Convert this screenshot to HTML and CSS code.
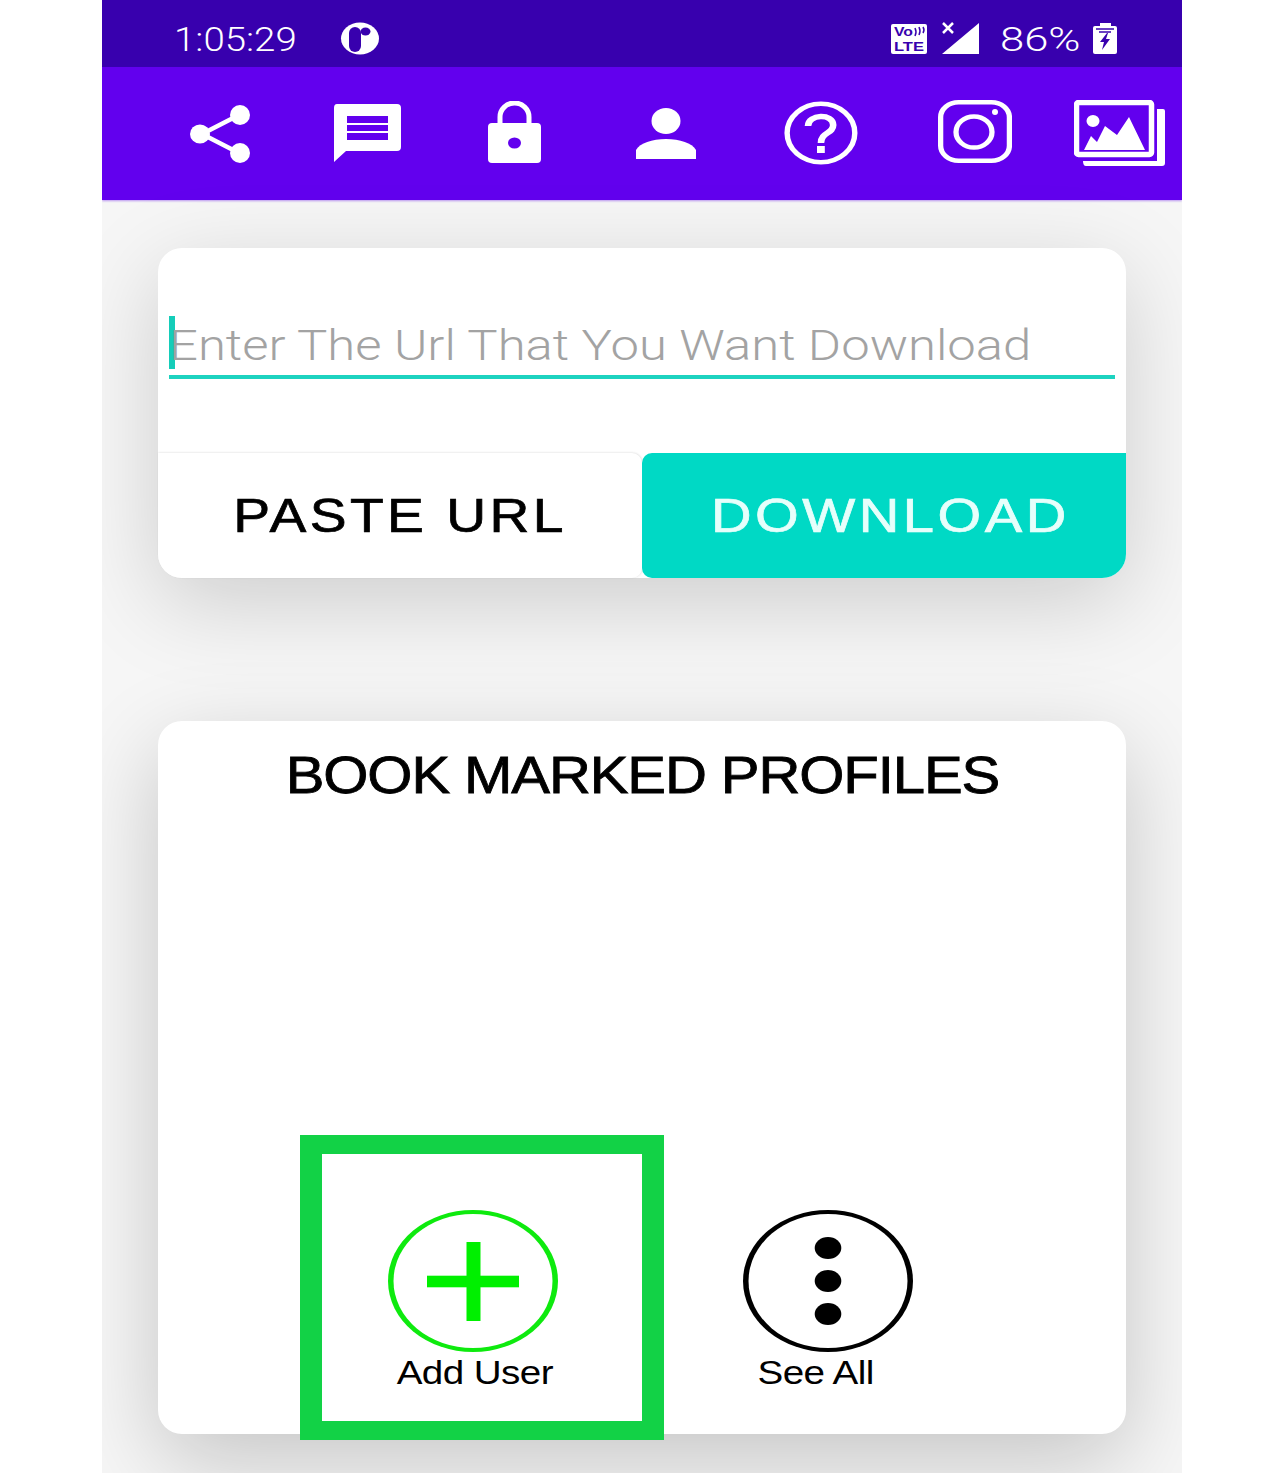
FILE: index.html
```html
<!DOCTYPE html>
<html lang="en">
<head>
    <meta charset="UTF-8">
    <meta name="viewport" content="width=device-width, initial-scale=1.0">
    <title>Bookmarked profiles</title>
    <link rel="stylesheet" href="styles.css">
</head>
<body>
    <div class="phone">
        <!-- status bar -->
        <div class="statusBar">
            <span class="clock">1:05:29</span>
            <svg class="appDot" width="40" height="33" viewBox="0 0 40 33">
                <ellipse cx="20" cy="16.500" rx="19" ry="16" fill="#fff"/>
                <rect x="9" y="5" width="12" height="25" rx="6" fill="#3800ae"/>
                <ellipse cx="25.500" cy="9.500" rx="5" ry="4" fill="#3800ae"/>
            </svg>
            <div class="statusRight">
                <svg class="volte" width="36" height="30" viewBox="0 0 36 30">
                    <rect width="36" height="30" rx="2" fill="#fff"/>
                    <text x="3" y="12" class="volteText" textLength="19" lengthAdjust="spacingAndGlyphs">Vo</text>
                    <text x="3" y="27" class="volteText" textLength="30" lengthAdjust="spacingAndGlyphs">LTE</text>
                    <path d="M24 4 q2 4 0 8 M28 3 q2 4 0 8 M32 3 q2 3 0 6" stroke="#3800ae" stroke-width="1.500" fill="none"/>
                </svg>
                <svg class="signal" width="38" height="33" viewBox="0 0 38 33">
                    <path d="M0 32 L37 1 V32 Z" fill="#fff"/>
                    <path d="M1 1 L11 11 M11 1 L1 11" stroke="#fff" stroke-width="2.500"/>
                </svg>
                <span class="percent">86%</span>
                <svg class="battery" width="24" height="31" viewBox="0 0 24 31">
                    <rect x="7" y="0" width="11" height="3" fill="#fff"/>
                    <rect x="0" y="3" width="24" height="28" rx="2" fill="#fff"/>
                    <path d="M3 6 H21 M6 9 H18" stroke="#3800ae" stroke-width="1.500"/>
                    <path d="M14 10 L7 19 H11 L9 27 L17 16 H13 L15 10 Z" fill="#3800ae"/>
                </svg>
            </div>
        </div>

        <!-- toolbar icons -->
        <div class="toolbar">
            <svg class="icon iconShare" width="62" height="60" viewBox="0 0 62 60">
                <path d="M49 11 L12 30 L49 49" stroke="#fff" stroke-width="4.500" fill="none"/>
                <ellipse cx="50" cy="11" rx="10" ry="10" fill="#fff"/>
                <ellipse cx="10" cy="30" rx="10" ry="9.500" fill="#fff"/>
                <ellipse cx="50" cy="49" rx="10" ry="10" fill="#fff"/>
            </svg>
            <svg class="icon iconMessage" width="68" height="59" viewBox="0 0 68 59">
                <path d="M4 0 H64 Q68 0 68 4 V43 Q68 47 64 47 H13 L1 58 V4 Q1 0 4 0 Z" fill="#fff"/>
                <path d="M14 12 H55 V19 H14 Z M14 21 H55 V27 H14 Z M14 29 H55 V36 H14 Z" fill="#6200ee"/>
            </svg>
            <svg class="icon iconLock" width="55" height="62" viewBox="0 0 55 62">
                <path d="M13 24 V16 A14.500 14 0 0 1 42 16 V24" stroke="#fff" stroke-width="5" fill="none"/>
                <rect x="1" y="22" width="53" height="40" rx="4" fill="#fff"/>
                <ellipse cx="27.500" cy="42" rx="6.500" ry="5.500" fill="#6200ee"/>
            </svg>
            <svg class="icon iconPerson" width="60" height="52" viewBox="0 0 60 52">
                <ellipse cx="30" cy="13" rx="14.500" ry="13" fill="#fff"/>
                <path d="M0 51 V42 C4 35 16 31 30 31 C44 31 56 35 60 42 V51 Z" fill="#fff"/>
            </svg>
            <svg class="icon iconHelp" width="74" height="64" viewBox="0 0 74 64">
                <g transform="scale(1.2 1)">
                    <ellipse cx="30.800" cy="32" rx="28.200" ry="29.200" fill="none" stroke="#fff" stroke-width="4.500"/>
                    <path d="M20 25 C20 13 41 12 41 24 C41 33 30.800 31 30.800 42" fill="none" stroke="#fff" stroke-width="5.500"/>
                    <rect x="27.500" y="45" width="6.500" height="7" fill="#fff"/>
                </g>
            </svg>
            <svg class="icon iconInsta" width="74" height="63" viewBox="0 0 74 63">
                <g transform="scale(1.2 1)">
                    <rect x="2.200" y="2.200" width="57.300" height="58.600" rx="15" fill="none" stroke="#fff" stroke-width="4.400"/>
                    <ellipse cx="30" cy="32" rx="15" ry="15.500" fill="none" stroke="#fff" stroke-width="4.400"/>
                    <ellipse cx="47.500" cy="12" rx="2.500" ry="3" fill="#fff"/>
                </g>
            </svg>
            <svg class="icon iconGallery" width="92" height="67" viewBox="0 0 92 67">
                <path d="M83 9 H89 Q91 9 91 11 V63 Q91 66 88 66 H12 Q9 66 9 61 H83 Z" fill="#fff"/>
                <rect x="2.500" y="2.500" width="75" height="52" fill="none" stroke="#fff" stroke-width="5.500" rx="2"/>
                <ellipse cx="19" cy="21" rx="6.500" ry="6" fill="#fff"/>
                <path d="M10 50 L17 36 L23 42 L31 26 L43 35 L55 17 L71 50 Z" fill="#fff"/>
            </svg>
        </div>

        <!-- url card -->
        <div class="card urlCard">
            <div class="urlField">
                <span class="caret"></span>
                <span class="placeholder">Enter The Url That You Want Download</span>
            </div>
            <div class="btnRow">
                <button class="btn btnPaste"><span>PASTE URL</span></button>
                <button class="btn btnDownload"><span>DOWNLOAD</span></button>
            </div>
        </div>

        <!-- bookmarks card -->
        <div class="card bookCard">
            <h2 class="bookTitle"><span>BOOK MARKED PROFILES</span></h2>
            <div class="actions">
                <div class="action actionAdd">
                    <svg width="170" height="144" viewBox="0 0 170 144">
                        <ellipse cx="85" cy="72" rx="85" ry="71" fill="#0eea0e"/>
                        <ellipse cx="85" cy="72" rx="79.500" ry="67" fill="#fff"/>
                        <rect x="39" y="66.700" width="92" height="11.600" fill="#00f000"/>
                        <rect x="78.500" y="33" width="14" height="79" fill="#00f000"/>
                    </svg>
                    <span class="actionLabel">Add User</span>
                </div>
                <div class="action actionAll">
                    <svg width="170" height="144" viewBox="0 0 170 144">
                        <ellipse cx="85" cy="72" rx="85" ry="71" fill="#000"/>
                        <ellipse cx="85" cy="72" rx="79.500" ry="67" fill="#fff"/>
                        <ellipse cx="85" cy="39" rx="13.300" ry="11"/>
                        <ellipse cx="85" cy="72" rx="13.300" ry="11"/>
                        <ellipse cx="85" cy="105" rx="13.300" ry="11"/>
                    </svg>
                    <span class="actionLabel">See All</span>
                </div>
            </div>
        </div>

        <!-- green highlight over add user -->
        <div class="highlight"></div>
    </div>
</body>
</html>
```

FILE: styles.css
```css
body {
    margin: 0;
    background: #fff;
    font-family: "Liberation Sans", Arial, sans-serif;
}

.phone {
    position: relative;
    width: 1080px;
    height: 1473px;
    margin-left: 102px;
    background: #f6f6f6;
    overflow: hidden;
}

/* status bar */
.statusBar {
    display: flex;
    align-items: center;
    height: 67px;
    padding: 10px 65px 0 72px;
    box-sizing: border-box;
    background: #3800ae;
    color: #fff;
}

.clock {
    display: inline-block;
    font-family: Roboto, "Liberation Sans", sans-serif;
    font-weight: 300;
    font-size: 34px;
    transform: scaleX(1.13);
    transform-origin: left center;
}

.appDot {
    margin-left: 57px;
}

.statusRight {
    display: flex;
    align-items: center;
    margin-left: auto;
}

.volteText {
    font: bold 13px "Liberation Sans", sans-serif;
    fill: #3800ae;
}

.signal {
    margin-left: 15px;
}

.percent {
    display: inline-block;
    width: 80px;
    margin-left: 20px;
    font-family: Roboto, "Liberation Sans", sans-serif;
    font-weight: 300;
    font-size: 34px;
    transform: scaleX(1.28);
    transform-origin: left center;
}

.battery {
    margin-left: 13px;
}

/* toolbar */
.toolbar {
    display: flex;
    align-items: flex-start;
    height: 133px;
    padding-left: 88px;
    box-sizing: border-box;
    background: #6200ee;
    box-shadow: 0 1px 2px rgba(98, 0, 238, 0.4);
}

.icon {
    flex: none;
}

.iconShare { margin-top: 37px; }
.iconMessage { margin: 37px 0 0 81px; }
.iconLock { margin: 34px 0 0 86px; }
.iconPerson { margin: 41px 0 0 94px; }
.iconHelp { margin: 34px 0 0 88px; }
.iconInsta { margin: 33px 0 0 80px; }
.iconGallery { margin: 33px 0 0 62px; }

/* cards */
.card {
    width: 968px;
    margin-left: 56px;
    background: #fff;
    border-radius: 24px;
    box-shadow: 0 28px 90px rgba(0, 0, 0, 0.2);
}

.urlCard {
    margin-top: 48px;
    box-shadow: 0 24px 90px rgba(0, 0, 0, 0.17);
}

.urlField {
    position: relative;
    height: 59px;
    margin: 0 11px 74px;
    padding-top: 68px;
    border-bottom: 4px solid #1dd3c0;
}

.caret {
    position: absolute;
    left: 0;
    top: 68px;
    width: 6px;
    height: 53px;
    background: #14cdb9;
}

.placeholder {
    display: inline-block;
    font-size: 43px;
    line-height: 58px;
    white-space: nowrap;
    color: #a3a3a3;
    font-family: Roboto, "Liberation Sans", sans-serif;
    font-weight: 300;
    transform: scaleX(1.182);
    transform-origin: left center;
}

.btnRow {
    display: flex;
    height: 125px;
}

.btn {
    flex: 0 0 50%;
    padding: 0;
    border: none;
    font-family: "Liberation Sans", sans-serif;
    font-size: 48px;
    letter-spacing: 3px;
    cursor: pointer;
}

.btn span {
    display: inline-block;
    transform: scaleX(1.15);
}

.btnPaste {
    background: #fff;
    color: #000;
    border-radius: 0 10px 10px 24px;
    box-shadow: 0 -1px 2px rgba(0, 0, 0, 0.05), 1px 0 2px rgba(0, 0, 0, 0.08);
    -webkit-text-stroke: 0.7px #000;
}

.btnDownload {
    padding-left: 12px;
    background: #00d9c5;
    color: #e6fffb;
    border-radius: 10px 0 24px 10px;
    -webkit-text-stroke: 0.7px #e6fffb;
}

.btnDownload span {
    transform: scaleX(1.17);
}

.bookCard {
    height: 713px;
    margin-top: 143px;
    position: relative;
}

.bookTitle {
    margin: 0;
    padding-top: 22px;
    text-align: center;
    font-size: 52px;
    line-height: 64px;
    font-weight: normal;
    color: #000;
    -webkit-text-stroke: 0.8px #000;
}

.bookTitle span {
    display: inline-block;
    letter-spacing: -1px;
    transform: scaleX(1.117);
}

.actions {
    display: flex;
    padding: 402px 0 0 230px;
}

.action {
    display: flex;
    flex-direction: column;
    align-items: center;
    width: 170px;
}

.actionAll {
    margin-left: 185px;
}

.actionLabel {
    display: block;
    margin-top: -1px;
    font-size: 33px;
    line-height: 42px;
    letter-spacing: -0.5px;
    white-space: nowrap;
    color: #000;
    transform: scaleX(1.17);
}

.actionAdd .actionLabel {
    margin-left: 3px;
}

.actionAll .actionLabel {
    margin-left: -24px;
}

.highlight {
    position: absolute;
    left: 198px;
    top: 1135px;
    width: 320px;
    height: 267px;
    border-style: solid;
    border-color: #12d246;
    border-width: 19px 22px;
}
```
